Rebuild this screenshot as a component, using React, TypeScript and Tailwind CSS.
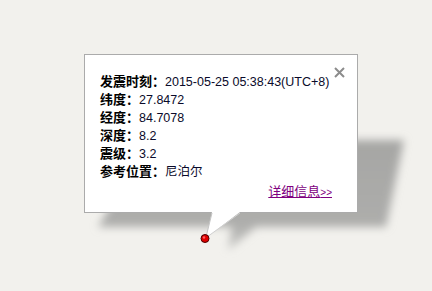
import React from 'react';

const rows: { label: string; value: string }[] = [
  { label: '发震时刻：', value: '2015-05-25 05:38:43(UTC+8)' },
  { label: '纬度：', value: '27.8472' },
  { label: '经度：', value: '84.7078' },
  { label: '深度：', value: '8.2' },
  { label: '震级：', value: '3.2' },
  { label: '参考位置：', value: '尼泊尔' },
];

const App: React.FC = () => {
  return (
    <div className="relative w-[432px] h-[291px] overflow-hidden bg-[#f2f1ed] font-['Liberation_Sans','Noto_Sans_CJK_SC',sans-serif]">
      {/* Shadow drawing */}
      <svg className="absolute left-0 top-0" width="432" height="291" viewBox="0 0 432 291">
        <defs>
          <filter id="blur" x="-20%" y="-40%" width="140%" height="180%">
            <feGaussianBlur stdDeviation="4" />
          </filter>
          <linearGradient id="sh" x1="0" y1="0" x2="0" y2="1">
            <stop offset="0" stopColor="#a6a6a4" />
            <stop offset="0.75" stopColor="#adadab" />
            <stop offset="1" stopColor="#c8c8c5" />
          </linearGradient>
        </defs>
        <path
          d="M150 140 L404 140 L386 227 L256 227 L228 250 L232 227 L98 227 Z"
          fill="url(#sh)"
          filter="url(#blur)"
        />
      </svg>

      {/* Info window */}
      <div className="absolute left-[84px] top-[54px] w-[274px] h-[159px] bg-white border border-[#ababab] pt-[18px] pl-[15px] pr-[25px]">
        <svg className="absolute left-[249px] top-[12px]" width="11" height="11" viewBox="0 0 11 11">
          <path d="M1 1 L10 10 M10 1 L1 10" stroke="#8c8c8c" strokeWidth="2" />
        </svg>
        <div className="flex flex-col text-[13px] leading-[18px]">
          {rows.map((r) => (
            <div key={r.label} className="flex items-baseline whitespace-nowrap">
              <span className="font-bold text-black">{r.label}</span>
              <span className="text-[12.5px] text-[#0a0a2a]">{r.value}</span>
            </div>
          ))}
        </div>
        <div className="flex justify-end mt-[2px] text-[13px] leading-[18px]">
          <span className="text-[#800080] underline">
            详细信息<span className="text-[10px]">&gt;&gt;</span>
          </span>
        </div>
      </div>

      {/* Tail and marker */}
      <svg className="absolute left-0 top-0" width="432" height="291" viewBox="0 0 432 291">
        <path d="M212 212 L240 212 L206 238 Z" fill="#ffffff" />
        <path d="M212 213 L206 237" stroke="#c4c4c4" strokeWidth="1" fill="none" />
        <path d="M240 213 L207 237" stroke="#d0d0d0" strokeWidth="1" fill="none" />
        <circle cx="205" cy="238.5" r="4" fill="#e00000" stroke="#4a0000" strokeWidth="1" />
        <circle cx="204" cy="237.5" r="1.2" fill="#ff6060" />
      </svg>
    </div>
  );
};

export default App;
